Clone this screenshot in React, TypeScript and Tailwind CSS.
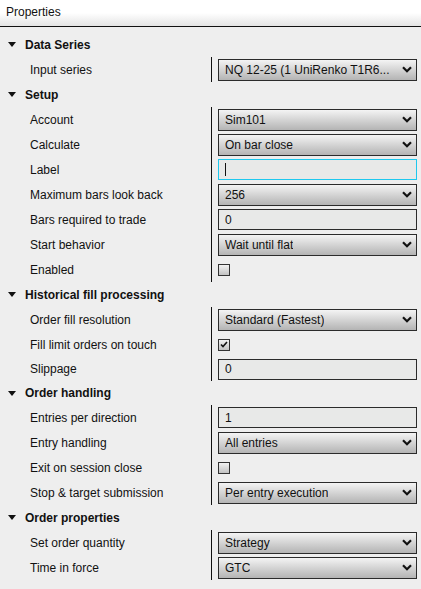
import React from "react";

type Row = {
  label: string;
  type: "select" | "text" | "focus" | "check";
  value?: string;
  checked?: boolean;
  short?: boolean;
};

const groups: { title: string; short?: boolean; rows: Row[] }[] = [
  {
    title: "Data Series",
    rows: [{ label: "Input series", type: "select", value: "NQ 12-25 (1 UniRenko T1R6..." }],
  },
  {
    title: "Setup",
    rows: [
      { label: "Account", type: "select", value: "Sim101" },
      { label: "Calculate", type: "select", value: "On bar close" },
      { label: "Label", type: "focus", value: "" },
      { label: "Maximum bars look back", type: "select", value: "256" },
      { label: "Bars required to trade", type: "text", value: "0" },
      { label: "Start behavior", type: "select", value: "Wait until flat" },
      { label: "Enabled", type: "check", checked: false },
    ],
  },
  {
    title: "Historical fill processing",
    rows: [
      { label: "Order fill resolution", type: "select", value: "Standard (Fastest)" },
      { label: "Fill limit orders on touch", type: "check", checked: true },
      { label: "Slippage", type: "text", value: "0", short: true },
    ],
  },
  {
    title: "Order handling",
    short: true,
    rows: [
      { label: "Entries per direction", type: "text", value: "1" },
      { label: "Entry handling", type: "select", value: "All entries" },
      { label: "Exit on session close", type: "check", checked: false },
      { label: "Stop & target submission", type: "select", value: "Per entry execution" },
    ],
  },
  {
    title: "Order properties",
    rows: [
      { label: "Set order quantity", type: "select", value: "Strategy" },
      { label: "Time in force", type: "select", value: "GTC" },
    ],
  },
];

function Chevron() {
  return (
    <svg width="10" height="7" viewBox="0 0 10 7" className="shrink-0">
      <path d="M1 1.2 L5 5.2 L9 1.2" fill="none" stroke="#111" strokeWidth="2.2" strokeLinecap="butt" />
    </svg>
  );
}

function Control({ row }: { row: Row }) {
  if (row.type === "select") {
    return (
      <div className="flex h-[22px] w-[199px] items-center justify-between border border-[#2b2b2b] bg-gradient-to-b from-[#f4f4f4] to-[#b4b4b4] pl-[6px] pr-[4px] text-[12px] text-[#111]">
        <span className="truncate whitespace-nowrap">{row.value}</span>
        <Chevron />
      </div>
    );
  }
  if (row.type === "text") {
    return (
      <div className="flex h-[21px] w-[199px] items-center border border-[#2b2b2b] bg-[#e8e9e8] pl-[6px] text-[12px] text-[#111]">
        {row.value}
      </div>
    );
  }
  if (row.type === "focus") {
    return (
      <div className="flex h-[21px] w-[199px] items-center border border-[#1ec8ee] bg-[#e8e9e8] pl-[6px]">
        <div className="h-[13px] w-px bg-[#111]" />
      </div>
    );
  }
  return (
    <div className="flex h-[12px] w-[12px] items-center justify-center border border-[#333] bg-gradient-to-b from-[#f2f2f2] to-[#c2c2c2]">
      {row.checked && (
        <svg width="8" height="7" viewBox="0 0 8 7">
          <path d="M1 3.5 L3 5.5 L7 1" fill="none" stroke="#111" strokeWidth="1.6" />
        </svg>
      )}
    </div>
  );
}

export default function App() {
  return (
    <div
      className="flex h-[589px] w-[421px] flex-col overflow-hidden bg-[#eeeeee] text-[12px] text-[#111]"
      style={{ fontFamily: '"Liberation Sans", Arial, sans-serif' }}
    >
      <div className="flex h-[26px] shrink-0 items-start bg-gradient-to-b from-white via-white to-[#e4e4e4] pl-[6px] pt-[5px] text-[12px] leading-[14px] text-[#111]">
        Properties
      </div>
      <div className="h-px shrink-0 bg-[#111]" />
      <div className="flex flex-col pt-[5px]">
        {groups.map((g) => (
          <div key={g.title} className="flex flex-col">
            <div className={`flex items-center ${g.short ? "h-[24px]" : "h-[25px]"}`}>
              <svg width="8" height="5" viewBox="0 0 8 5" className="ml-[8px] mr-[9px]">
                <path d="M0 0 L8 0 L4 5 Z" fill="#111" />
              </svg>
              <span className="font-bold">{g.title}</span>
            </div>
            {g.rows.map((r) => (
              <div key={r.label} className={`flex items-stretch ${r.short ? "h-[24px]" : "h-[25px]"}`}>
                <div className="flex w-[211px] items-center pl-[30px]">{r.label}</div>
                <div className="flex flex-1 items-center border-l border-[#111] pl-[6px]">
                  <Control row={r} />
                </div>
              </div>
            ))}
          </div>
        ))}
      </div>
    </div>
  );
}
